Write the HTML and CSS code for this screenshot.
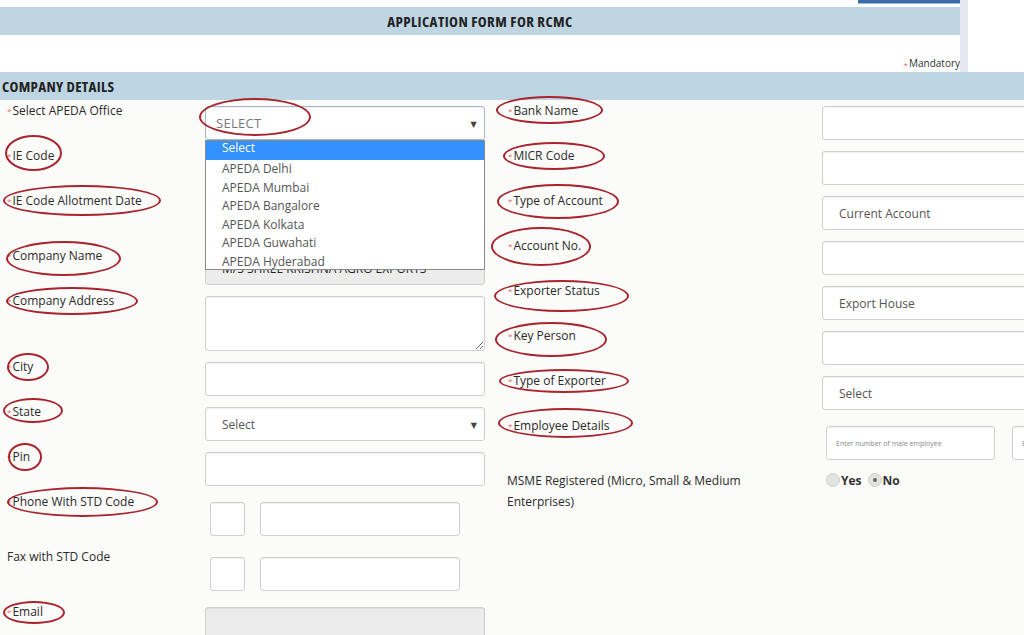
FILE: index.html
```html
<!DOCTYPE html>
<html lang="en">
<head>
<meta charset="UTF-8" />
<meta name="viewport" content="width=device-width, initial-scale=1" />
<title>Application Form for RCMC</title>
<link rel="stylesheet" href="styles.css">
</head>
<body>
<div class="page">

  <div class="top">
    <div class="top-main">
      <div class="topbar"><span class="top-btn"></span></div>
      <div class="title">APPLICATION FORM FOR RCMC</div>
      <div class="mandatory"><span class="req">*</span>Mandatory</div>
    </div>
    <div class="scroll-strip"></div>
  </div>

  <div class="section-head">COMPANY DETAILS</div>

  <div class="form">
    <div class="col col-left">
      <div class="field">
        <label><span class="req">*</span>Select APEDA Office</label>
        <div class="control dropdown">
          <div class="select office">SELECT<span class="arrow">&#9660;</span></div>
          <ul class="options">
            <li class="picked">Select</li>
            <li>APEDA Delhi</li>
            <li>APEDA Mumbai</li>
            <li>APEDA Bangalore</li>
            <li>APEDA Kolkata</li>
            <li>APEDA Guwahati</li>
            <li>APEDA Hyderabad</li>
          </ul>
        </div>
      </div>
      <div class="field">
        <label><span class="req">*</span>IE Code</label>
        <div class="control"><input type="text" /></div>
      </div>
      <div class="field gap-10">
        <label><span class="req">*</span>IE Code Allotment Date</label>
        <div class="control"><input type="text" /></div>
      </div>
      <div class="field">
        <label><span class="req">*</span>Company Name</label>
        <div class="control"><input type="text" class="locked" value="M/S SHREE KRISHNA AGRO EXPORTS" disabled /></div>
      </div>
      <div class="field field-area">
        <label><span class="req">*</span>Company Address</label>
        <div class="control"><textarea></textarea></div>
      </div>
      <div class="field">
        <label><span class="req">*</span>City</label>
        <div class="control"><input type="text" /></div>
      </div>
      <div class="field">
        <label><span class="req">*</span>State</label>
        <div class="control"><div class="select">Select<span class="arrow">&#9660;</span></div></div>
      </div>
      <div class="field gap-5">
        <label><span class="req">*</span>Pin</label>
        <div class="control"><input type="text" /></div>
      </div>
      <div class="field gap-10 raised">
        <label><span class="req">*</span>Phone With STD Code</label>
        <div class="control pair">
          <input type="text" class="std" />
          <input type="text" class="num" />
        </div>
      </div>
      <div class="field gap-5 raised">
        <label class="plain">Fax with STD Code</label>
        <div class="control pair">
          <input type="text" class="std" />
          <input type="text" class="num" />
        </div>
      </div>
      <div class="field">
        <label><span class="req">*</span>Email</label>
        <div class="control"><input type="text" class="locked" disabled /></div>
      </div>
    </div>

    <div class="col col-right">
      <div class="field">
        <label><span class="req">*</span>Bank Name</label>
        <div class="control"><input type="text" /></div>
      </div>
      <div class="field">
        <label><span class="req">*</span>MICR Code</label>
        <div class="control"><input type="text" /></div>
      </div>
      <div class="field">
        <label><span class="req">*</span>Type of Account</label>
        <div class="control"><div class="select">Current Account</div></div>
      </div>
      <div class="field">
        <label><span class="req">*</span>Account No.</label>
        <div class="control"><input type="text" /></div>
      </div>
      <div class="field">
        <label><span class="req">*</span>Exporter Status</label>
        <div class="control"><div class="select">Export House</div></div>
      </div>
      <div class="field">
        <label><span class="req">*</span>Key Person</label>
        <div class="control"><input type="text" /></div>
      </div>
      <div class="field gap-5">
        <label><span class="req">*</span>Type of Exporter</label>
        <div class="control"><div class="select">Select</div></div>
      </div>
      <div class="field gap-0 raised">
        <label><span class="req">*</span>Employee Details</label>
        <div class="control employees">
          <input type="text" placeholder="Enter number of male employee" />
          <input type="text" placeholder="Enter number of female employee" />
        </div>
      </div>
      <div class="field field-msme">
        <label class="plain"><span class="wrap">MSME Registered (Micro, Small &amp; Medium Enterprises)</span></label>
        <div class="control radios">
          <span class="radio"></span><b>Yes</b>
          <span class="radio on"></span><b>No</b>
        </div>
      </div>
    </div>
  </div>

  <!-- red hand-drawn markers over the screenshot -->
  <div class="marks">
    <span class="ring r-select"></span>
    <span class="ring r-iecode"></span>
    <span class="ring r-iedate"></span>
    <span class="ring r-cname"></span>
    <span class="ring r-caddr"></span>
    <span class="ring r-city"></span>
    <span class="ring r-state"></span>
    <span class="ring r-pin"></span>
    <span class="ring r-phone"></span>
    <span class="ring r-email"></span>
    <span class="ring r-bank"></span>
    <span class="ring r-micr"></span>
    <span class="ring r-acctype"></span>
    <span class="ring r-accno"></span>
    <span class="ring r-status"></span>
    <span class="ring r-key"></span>
    <span class="ring r-exptype"></span>
    <span class="ring r-emp"></span>
  </div>

</div>
</body>
</html>
```

FILE: styles.css
```css
* { box-sizing: border-box; }
body { margin: 0; font-family: "Open Sans", "DejaVu Sans", sans-serif; font-size: 12px; color: #333; background: #fff; overflow: hidden; }
.page { position: relative; width: 1024px; height: 635px; overflow: hidden; background: #fbfbf9; }

.top { display: flex; background: #fff; }
.top-main { width: 960px; }
.topbar { height: 7px; display: flex; justify-content: flex-end; }
.top-btn { width: 102px; height: 4px; background: #3a6aa8; border-bottom: 1px solid #9db4d2; }
.title { height: 28px; background: #bfd5e2; text-align: center; font-weight: 700; font-size: 15px; line-height: 28px; color: #222; font-stretch: 87.5%; letter-spacing: 0.4px; }
.mandatory { height: 37px; display: flex; justify-content: flex-end; align-items: flex-end; padding-bottom: 2px; font-size: 10px; color: #333; font-stretch: 90%; }
.scroll-strip { width: 8px; background: #e4e7ee; }

.section-head { height: 28px; background: #bed5e3; font-weight: 700; font-size: 15px; line-height: 28px; padding-left: 2px; color: #222; font-stretch: 87.5%; letter-spacing: 0.3px; }

.req { color: #e36b6b; font-size: 8px; vertical-align: top; margin-right: 1px; }

.form { display: grid; grid-template-columns: 490px 1fr; padding-top: 6px; }
.field { display: flex; height: 34px; margin-bottom: 11px; }
.field label { flex: none; margin-top: -4px; line-height: 17px; color: #2a2a2a; }
.field.raised label { margin-top: -9px; }
.col-left label { width: 205px; padding-left: 7px; }
.col-right label { width: 332px; padding-left: 18px; }
.field label.plain { padding-left: 7px; }
.col-right label.plain { padding-left: 17px; }
.gap-10 { margin-bottom: 21px; }
.gap-5 { margin-bottom: 16px; }
.gap-0 { margin-bottom: 10px; }

.control { position: relative; width: 280px; height: 34px; }
.col-right .control { width: 260px; }

input, textarea, .select { width: 100%; height: 34px; border: 1px solid #cfcfcf; border-radius: 3px; background: #fff; box-shadow: inset 0 1px 1px rgba(0,0,0,.06); font-family: inherit; font-size: 12px; color: #555; padding: 0 16px; }
input.locked { background: #ececec; color: #222; }
.select { display: flex; align-items: center; position: relative; }
.arrow { position: absolute; right: 7px; top: 11px; font-size: 8px; color: #444; }

.office { border-color: #a9b6c6; padding-left: 10px; font-size: 13px; color: #777; letter-spacing: 0.3px; }
.options { position: absolute; left: 0; top: 34px; width: 280px; height: 130px; margin: 0; padding: 0; list-style: none; background: #fff; border: 1px solid #8a8a8a; z-index: 2; }
.options li { height: 18.5px; line-height: 18px; padding-left: 16px; color: #555; }
.options li.picked { background: #3392ff; color: #fff; line-height: 14px; height: 19px; }

.field-area { height: 55px; }
.field-area .control { height: 55px; }
textarea { height: 55px; resize: vertical; padding: 6px 16px; }

.pair { display: flex; gap: 15px; padding-left: 5px; }
.pair .std { width: 35px; padding: 0; }
.pair .num { width: 200px; }

.employees { display: flex; gap: 17px; padding-left: 4px; width: 300px; }
.employees input { flex: none; width: 169px; font-size: 7px; padding: 0 9px; color: #999; }
.employees input::placeholder { color: #888; }

.field-msme { height: 50px; margin-bottom: 0; }
.field-msme label { margin-top: 0; line-height: 21px; }
.wrap { display: block; width: 262px; }
.radios { display: flex; align-items: flex-start; padding-left: 4px; padding-top: 3px; gap: 1px; font-size: 12px; }
.radios b { color: #333; margin-right: 5px; line-height: 15px; }
.radio { width: 14px; height: 14px; border-radius: 50%; background: #e2e2e2; border: 1px solid #cfcfcf; position: relative; }
.radio.on::after { content: ""; position: absolute; left: 4px; top: 4px; width: 4px; height: 4px; border-radius: 50%; background: #666; }

.marks { position: absolute; left: 0; top: 0; width: 1024px; height: 635px; pointer-events: none; z-index: 5; }
.ring { position: absolute; border: 2px solid #a8252e; border-radius: 50%; }
.r-select { left: 199px; top: 98px; width: 112px; height: 38px; }
.r-iecode { left: 5px; top: 135px; width: 57px; height: 36px; }
.r-iedate { left: 3px; top: 185px; width: 158px; height: 31px; }
.r-cname { left: 6px; top: 241px; width: 115px; height: 35px; }
.r-caddr { left: 6px; top: 287px; width: 132px; height: 28px; }
.r-city { left: 7px; top: 353px; width: 42px; height: 28px; }
.r-state { left: 3px; top: 398px; width: 60px; height: 25px; }
.r-pin { left: 8px; top: 443px; width: 34px; height: 28px; }
.r-phone { left: 7px; top: 487px; width: 151px; height: 30px; }
.r-email { left: 3px; top: 601px; width: 62px; height: 23px; }
.r-bank { left: 496px; top: 96px; width: 107px; height: 28px; }
.r-micr { left: 503px; top: 142px; width: 102px; height: 28px; }
.r-acctype { left: 497px; top: 184px; width: 122px; height: 35px; }
.r-accno { left: 491px; top: 227px; width: 100px; height: 39px; }
.r-status { left: 494px; top: 280px; width: 135px; height: 32px; }
.r-key { left: 495px; top: 322px; width: 112px; height: 35px; }
.r-exptype { left: 499px; top: 369px; width: 130px; height: 24px; }
.r-emp { left: 498px; top: 408px; width: 135px; height: 30px; }
```
